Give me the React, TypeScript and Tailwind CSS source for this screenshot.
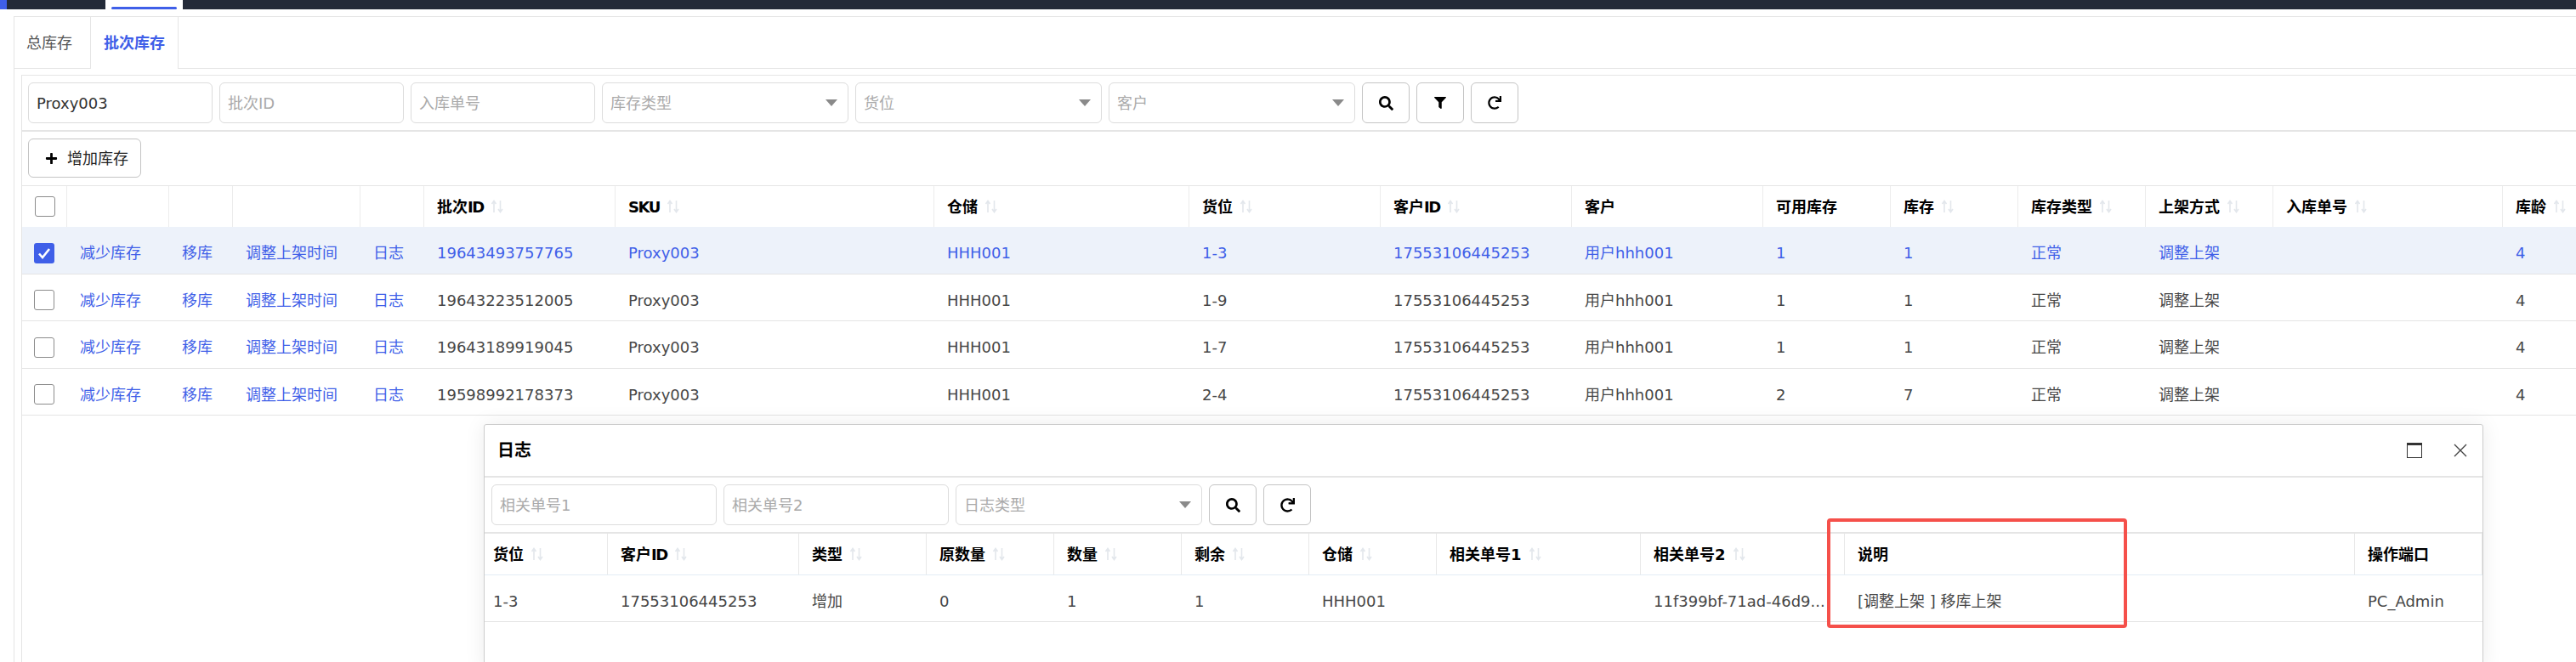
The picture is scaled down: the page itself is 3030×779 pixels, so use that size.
import { FaFilter, FaPlus, FaRedo, FaSearch } from 'react-icons/fa';

const stockCols = [
  { label: '', sort: false },
  { label: '', sort: false },
  { label: '', sort: false },
  { label: '', sort: false },
  { label: '', sort: false },
  { label: '批次', latin: 'ID', sort: true },
  { label: '', latin: 'SKU', sort: true },
  { label: '仓储', sort: true },
  { label: '货位', sort: true },
  { label: '客户', latin: 'ID', sort: true },
  { label: '客户', sort: false },
  { label: '可用库存', sort: false },
  { label: '库存', sort: true },
  { label: '库存类型', sort: true },
  { label: '上架方式', sort: true },
  { label: '入库单号', sort: true },
  { label: '库龄', sort: true },
];

const stockRows = [
  { id: '19643493757765', loc: '1-3', avail: '1', stock: '1', selected: true },
  { id: '19643223512005', loc: '1-9', avail: '1', stock: '1', selected: false },
  { id: '19643189919045', loc: '1-7', avail: '1', stock: '1', selected: false },
  { id: '19598992178373', loc: '2-4', avail: '2', stock: '7', selected: false },
];

const logCols = [
  { label: '货位', sort: true },
  { label: '客户', latin: 'ID', sort: true },
  { label: '类型', sort: true },
  { label: '原数量', sort: true },
  { label: '数量', sort: true },
  { label: '剩余', sort: true },
  { label: '仓储', sort: true },
  { label: '相关单号1', sort: true },
  { label: '相关单号2', sort: true },
  { label: '说明', sort: false },
  { label: '操作端口', sort: false },
];

const logRow = ['1-3', '17553106445253', '增加', '0', '1', '1', 'HHH001', '', '11f399bf-71ad-46d9...', '[调整上架 ] 移库上架', 'PC_Admin'];

const stockGrid = 'grid grid-cols-[53px_120px_75px_150px_75px_225px_375px_300px_225px_225px_225px_150px_150px_150px_150px_270px_87px]';
const logGrid = 'grid grid-cols-[145px_225px_150px_150px_150px_150px_150px_240px_240px_600px_150px]';

function SortIcon() {
  return (
    <svg width="16" height="16" viewBox="0 0 16 16" fill="none" stroke="#e3e7ec" strokeWidth="1.6" className="ml-2 shrink-0">
      <path d="M4 15V2M1.5 5L4 1.5L6.5 5" />
      <path d="M11.5 1V14M9 11L11.5 14.5L14 11" />
    </svg>
  );
}

function HeaderLabel({ label, latin }: { label: string; latin?: string }) {
  return (
    <span>
      {label}
      {latin && <span className="tracking-[-1.4px]">{latin}</span>}
    </span>
  );
}

function TextInput({ placeholder, defaultValue, width }: { placeholder: string; defaultValue?: string; width: string }) {
  return (
    <input
      placeholder={placeholder}
      defaultValue={defaultValue}
      className={`${width} h-12 rounded-md border border-[#dcdcdc] px-[9px] text-[18px] text-[#333] outline-none placeholder:text-[#aaaaaa]`}
    />
  );
}

function SelectBox({ placeholder, width }: { placeholder: string; width: string }) {
  return (
    <div className={`${width} flex h-12 items-center justify-between rounded-md border border-[#dcdcdc] pl-[9px] pr-3 text-[18px] text-[#aaaaaa]`}>
      <span>{placeholder}</span>
      <span className="h-0 w-0 border-x-[7px] border-t-[8px] border-x-transparent border-t-[#8a8a8a]" />
    </div>
  );
}

function IconButton({ children }: { children: React.ReactNode }) {
  return (
    <button className="flex h-12 w-14 items-center justify-center rounded-md border border-[#c4c4c4] text-[17px] text-black">
      {children}
    </button>
  );
}

function Checkbox({ checked }: { checked: boolean }) {
  if (checked) {
    return (
      <span className="flex h-6 w-6 items-center justify-center rounded-[3px] bg-[#3f5fe8]">
        <svg width="16" height="14" viewBox="0 0 16 14" fill="none" stroke="white" strokeWidth="2.6">
          <path d="M2 7.5L6 12L14 2" />
        </svg>
      </span>
    );
  }
  return <span className="block h-6 w-6 rounded-[3px] border border-[#8c8c8c]" />;
}

function StockTable() {
  return (
    <div className="border-t border-[#e5e5e5]">
      <div className={`${stockGrid} h-12`}>
        {stockCols.map((col, i) => (
          <div key={i} className="flex items-center border-r border-[#ececec] pl-[15px] text-[18px] font-bold text-black">
            {i === 0 ? <Checkbox checked={false} /> : <HeaderLabel label={col.label} latin={col.latin} />}
            {col.sort && <SortIcon />}
          </div>
        ))}
      </div>
      {stockRows.map((row) => {
        const tone = row.selected ? 'text-[#3f5fe8] bg-[#edf2fa]' : 'text-[#474747] bg-white';
        const values = [row.id, 'Proxy003', 'HHH001', row.loc, '17553106445253', '用户hhh001', row.avail, row.stock, '正常', '调整上架', '', '4'];
        return (
          <div key={row.id} className={`${stockGrid} ${tone} h-[55.5px] border-b border-[#e4e4e4] pt-[7px] text-[18px]`}>
            <div className="flex items-center pl-[14px]">
              <Checkbox checked={row.selected} />
            </div>
            {['减少库存', '移库', '调整上架时间', '日志'].map((action) => (
              <div key={action} className="flex items-center pl-[15px] text-[#3f5fe8]">
                {action}
              </div>
            ))}
            {values.map((value, i) => (
              <div key={i} className="flex items-center pl-[15px]">
                {value}
              </div>
            ))}
          </div>
        );
      })}
    </div>
  );
}

function LogDialog() {
  return (
    <div className="absolute left-[569px] top-[499px] h-[290px] w-[2352px] rounded-[3px] border border-[#cccccc] bg-white shadow-[0_0_24px_rgba(0,0,0,0.08)]">
      <div className="flex h-[62px] items-center justify-between border-b-2 border-[#e5e5e5] pl-[15px] pr-[18px]">
        <span className="text-[20px] font-bold text-black">日志</span>
        <div className="flex items-center gap-[37px]">
          <span className="block h-[18px] w-[18px] border border-t-[3px] border-[#333]" />
          <svg width="16" height="16" viewBox="0 0 16 16" stroke="#444" strokeWidth="1.4">
            <path d="M1 1L15 15M15 1L1 15" />
          </svg>
        </div>
      </div>
      <div className="flex h-[66px] items-center gap-2 border-b-2 border-[#e5e5e5] pl-[8px]">
        <TextInput placeholder="相关单号1" width="w-[265px]" />
        <TextInput placeholder="相关单号2" width="w-[265px]" />
        <SelectBox placeholder="日志类型" width="w-[290px]" />
        <IconButton><FaSearch /></IconButton>
        <IconButton><FaRedo /></IconButton>
      </div>
      <div className={`${logGrid} h-[49px] border-b border-[#e3edf5]`}>
        {logCols.map((col, i) => (
          <div key={col.label} className={`flex items-center border-r border-[#e8e8e8] text-[18px] font-bold text-black ${i === 0 ? 'pl-[10px]' : 'pl-[15px]'}`}>
            <HeaderLabel label={col.label} latin={col.latin} />
            {col.sort && <SortIcon />}
          </div>
        ))}
      </div>
      <div className={`${logGrid} h-[55px] border-b border-[#e4e4e4] pt-[6px] text-[18px] text-[#474747]`}>
        {logRow.map((value, i) => (
          <div key={i} className={`self-center whitespace-nowrap ${i === 0 ? 'pl-[10px]' : 'pl-[15px]'}`}>
            {value}
          </div>
        ))}
      </div>
    </div>
  );
}

export default function App() {
  return (
    <div className="relative h-[779px] w-[3030px] overflow-hidden bg-white [font-family:'DejaVu_Sans','Noto_Sans_CJK_SC',sans-serif]">
      <div className="flex h-[11px] bg-[#232a38]">
        <div className="w-2 bg-[#3f5fe8]" />
        <div className="w-[116px]" />
        <div className="flex w-[91px] items-end justify-center bg-white">
          <div className="h-[3px] w-[77px] rounded-sm bg-[#3f5fe8]" />
        </div>
      </div>

      <div className="ml-4 mt-2 h-[760px] border-l border-t border-[#e5e5e5]">
        <div className="flex h-[61px] text-[18px]">
          <div className="flex w-[90px] items-center border-b border-r border-[#e5e5e5] pl-[14px] text-[#555]">总库存</div>
          <div className="flex w-[103px] items-center justify-center border-r border-[#e5e5e5] font-bold text-[#3f5fe8]">批次库存</div>
          <div className="flex-1 border-b border-[#e5e5e5]" />
        </div>

        <div className="ml-2 mt-[7px] h-full border-l border-[#e5e5e5]">
          <div className="flex h-[67px] gap-2 border-b-2 border-t border-[#e5e5e5] pl-[7px] pt-2">
            <TextInput placeholder="SKU" defaultValue="Proxy003" width="w-[217px]" />
            <TextInput placeholder="批次ID" width="w-[217px]" />
            <TextInput placeholder="入库单号" width="w-[217px]" />
            <SelectBox placeholder="库存类型" width="w-[290px]" />
            <SelectBox placeholder="货位" width="w-[290px]" />
            <SelectBox placeholder="客户" width="w-[290px]" />
            <IconButton><FaSearch /></IconButton>
            <IconButton><FaFilter className="text-[14px]" /></IconButton>
            <IconButton><FaRedo className="text-[16px]" /></IconButton>
          </div>

          <div className="flex h-[63px] items-start pl-[7px] pt-2">
            <button className="flex h-[46px] w-[133px] items-center gap-[11px] rounded-md border border-[#c4c4c4] pl-[19px] text-[18px] text-[#222]">
              <FaPlus className="text-[15px] text-black" />
              增加库存
            </button>
          </div>

          <StockTable />
        </div>
      </div>

      <LogDialog />

      <div className="pointer-events-none absolute left-[2149px] top-[610px] h-[129px] w-[353px] rounded border-4 border-[#f5504a]" />
    </div>
  );
}
